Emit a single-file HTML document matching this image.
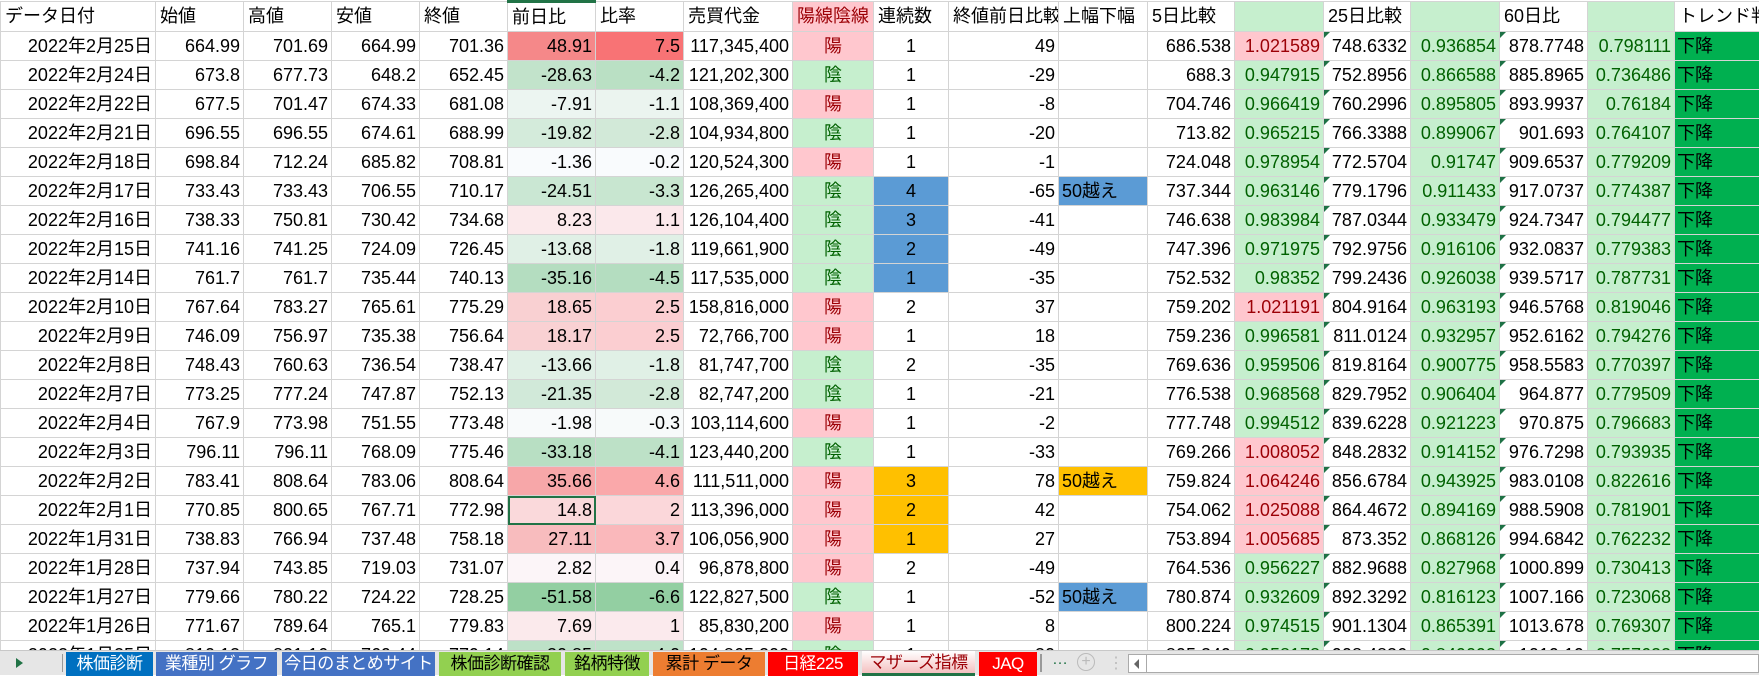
<!DOCTYPE html>
<html><head><meta charset="utf-8"><style>
*{margin:0;padding:0;box-sizing:border-box}
body{width:1759px;height:675px;overflow:hidden;background:#fff;font-family:"Liberation Sans","Noto Sans CJK JP",sans-serif;font-size:18px;color:#000;position:relative}
table{position:absolute;left:0;top:0;border-collapse:collapse;table-layout:fixed;width:1759px}
td{border:1px solid #d4d4d4;height:29px;padding:0 3px;text-align:right;white-space:nowrap;overflow:hidden;line-height:27px;position:relative}
tr.h td{height:30px;text-align:left;padding-left:4px}
td.c{text-align:center}
td.l{text-align:left}
.yo{background:#ffc7ce;color:#9c0006;text-align:center}
.in{background:#c6efce;color:#006100;text-align:center}
.g{background:#c6efce;color:#006100}
.p{background:#ffc7ce;color:#9c0006}
.s{background:#00b050;text-align:left;padding-left:2px}
.b{background:#5b9bd5}
.o{background:#ffc000}
.t::before{content:"";position:absolute;left:0;top:0;border-top:6px solid #1e7145;border-right:6px solid transparent}
.sel{outline:2px solid #217346;outline-offset:-2px}
#bar{position:absolute;left:0;top:650px;width:1759px;height:25px;background:#e6e6e6;border-top:1px solid #c8c8c8}
.tab{position:absolute;top:1px;height:24px;line-height:23px;text-align:center;font-size:17px;color:#fff;white-space:nowrap;overflow:hidden;letter-spacing:-0.5px}
</style></head><body>
<table>
<colgroup><col style="width:155px"><col style="width:88px"><col style="width:88px"><col style="width:88px"><col style="width:88px"><col style="width:88px"><col style="width:88px"><col style="width:109px"><col style="width:81px"><col style="width:75px"><col style="width:110px"><col style="width:89px"><col style="width:87px"><col style="width:89px"><col style="width:87px"><col style="width:89px"><col style="width:88px"><col style="width:87px"><col style="width:85px"></colgroup>
<tr class="h"><td>データ日付</td><td>始値</td><td>高値</td><td>安値</td><td>終値</td><td style="border-top:3px solid #217346">前日比</td><td>比率</td><td>売買代金</td><td style="background:#ffc7ce;color:#9c0006">陽線陰線</td><td>連続数</td><td>終値前日比較</td><td>上幅下幅</td><td>5日比較</td><td class="g"></td><td>25日比較</td><td class="g"></td><td>60日比</td><td class="g"></td><td>トレンド判</td></tr>
<tr><td>2022年2月25日</td><td>664.99</td><td>701.69</td><td>664.99</td><td>701.36</td><td style="background:#f58889">48.91</td><td style="background:#f87375">7.5</td><td>117,345,400</td><td class="yo">陽</td><td class="c">1</td><td>49</td><td></td><td>686.538</td><td class="p">1.021589</td><td class="t">748.6332</td><td class="g">0.936854</td><td class="t">878.7748</td><td class="g">0.798111</td><td class="s">下降</td></tr>
<tr><td>2022年2月24日</td><td>673.8</td><td>677.73</td><td>648.2</td><td>652.45</td><td style="background:#c2e3cb">-28.63</td><td style="background:#bae0c4">-4.2</td><td>121,202,300</td><td class="in">陰</td><td class="c">1</td><td>-29</td><td></td><td>688.3</td><td class="g">0.947915</td><td class="t">752.8956</td><td class="g">0.866588</td><td class="t">885.8965</td><td class="g">0.736486</td><td class="s">下降</td></tr>
<tr><td>2022年2月22日</td><td>677.5</td><td>701.47</td><td>674.33</td><td>681.08</td><td style="background:#ecf5f1">-7.91</td><td style="background:#ebf4ef">-1.1</td><td>108,369,400</td><td class="yo">陽</td><td class="c">1</td><td>-8</td><td></td><td>704.746</td><td class="g">0.966419</td><td class="t">760.2996</td><td class="g">0.895805</td><td class="t">893.9937</td><td class="g">0.76184</td><td class="s">下降</td></tr>
<tr><td>2022年2月21日</td><td>696.55</td><td>696.55</td><td>674.61</td><td>688.99</td><td style="background:#d4ebdb">-19.82</td><td style="background:#d2e9d8">-2.8</td><td>104,934,800</td><td class="in">陰</td><td class="c">1</td><td>-20</td><td></td><td>713.82</td><td class="g">0.965215</td><td class="t">766.3388</td><td class="g">0.899067</td><td class="t">901.693</td><td class="g">0.764107</td><td class="s">下降</td></tr>
<tr><td>2022年2月18日</td><td>698.84</td><td>712.24</td><td>685.82</td><td>708.81</td><td style="background:#f9fbfd">-1.36</td><td style="background:#f9fbfd">-0.2</td><td>120,524,300</td><td class="yo">陽</td><td class="c">1</td><td>-1</td><td></td><td>724.048</td><td class="g">0.978954</td><td class="t">772.5704</td><td class="g">0.91747</td><td class="t">909.6537</td><td class="g">0.779209</td><td class="s">下降</td></tr>
<tr><td>2022年2月17日</td><td>733.43</td><td>733.43</td><td>706.55</td><td>710.17</td><td style="background:#cae7d3">-24.51</td><td style="background:#c8e6d0">-3.3</td><td>126,265,400</td><td class="in">陰</td><td class="c b">4</td><td>-65</td><td class="l b">50越え</td><td>737.344</td><td class="g">0.963146</td><td class="t">779.1796</td><td class="g">0.911433</td><td class="t">917.0737</td><td class="g">0.774387</td><td class="s">下降</td></tr>
<tr><td>2022年2月16日</td><td>738.33</td><td>750.81</td><td>730.42</td><td>734.68</td><td style="background:#fbe9eb">8.23</td><td style="background:#fbe8eb">1.1</td><td>126,104,400</td><td class="in">陰</td><td class="c b">3</td><td>-41</td><td></td><td>746.638</td><td class="g">0.983984</td><td class="t">787.0344</td><td class="g">0.933479</td><td class="t">924.7347</td><td class="g">0.794477</td><td class="s">下降</td></tr>
<tr><td>2022年2月15日</td><td>741.16</td><td>741.25</td><td>724.09</td><td>726.45</td><td style="background:#e0f0e6">-13.68</td><td style="background:#e0f0e6">-1.8</td><td>119,661,900</td><td class="in">陰</td><td class="c b">2</td><td>-49</td><td></td><td>747.396</td><td class="g">0.971975</td><td class="t">792.9756</td><td class="g">0.916106</td><td class="t">932.0837</td><td class="g">0.779383</td><td class="s">下降</td></tr>
<tr><td>2022年2月14日</td><td>761.7</td><td>761.7</td><td>735.44</td><td>740.13</td><td style="background:#b4ddc0">-35.16</td><td style="background:#b4ddc0">-4.5</td><td>117,535,000</td><td class="in">陰</td><td class="c b">1</td><td>-35</td><td></td><td>752.532</td><td class="g">0.98352</td><td class="t">799.2436</td><td class="g">0.926038</td><td class="t">939.5717</td><td class="g">0.787731</td><td class="s">下降</td></tr>
<tr><td>2022年2月10日</td><td>767.64</td><td>783.27</td><td>765.61</td><td>775.29</td><td style="background:#f9d0d2">18.65</td><td style="background:#fbced1">2.5</td><td>158,816,000</td><td class="yo">陽</td><td class="c">2</td><td>37</td><td></td><td>759.202</td><td class="p">1.021191</td><td class="t">804.9164</td><td class="g">0.963193</td><td class="t">946.5768</td><td class="g">0.819046</td><td class="s">下降</td></tr>
<tr><td>2022年2月9日</td><td>746.09</td><td>756.97</td><td>735.38</td><td>756.64</td><td style="background:#f9d1d3">18.17</td><td style="background:#fbced1">2.5</td><td>72,766,700</td><td class="yo">陽</td><td class="c">1</td><td>18</td><td></td><td>759.236</td><td class="g">0.996581</td><td class="t">811.0124</td><td class="g">0.932957</td><td class="t">952.6162</td><td class="g">0.794276</td><td class="s">下降</td></tr>
<tr><td>2022年2月8日</td><td>748.43</td><td>760.63</td><td>736.54</td><td>738.47</td><td style="background:#e0f0e6">-13.66</td><td style="background:#e0f0e6">-1.8</td><td>81,747,700</td><td class="in">陰</td><td class="c">2</td><td>-35</td><td></td><td>769.636</td><td class="g">0.959506</td><td class="t">819.8164</td><td class="g">0.900775</td><td class="t">958.5583</td><td class="g">0.770397</td><td class="s">下降</td></tr>
<tr><td>2022年2月7日</td><td>773.25</td><td>777.24</td><td>747.87</td><td>752.13</td><td style="background:#d1e9d9">-21.35</td><td style="background:#d2e9d8">-2.8</td><td>82,747,200</td><td class="in">陰</td><td class="c">1</td><td>-21</td><td></td><td>776.538</td><td class="g">0.968568</td><td class="t">829.7952</td><td class="g">0.906404</td><td class="t">964.877</td><td class="g">0.779509</td><td class="s">下降</td></tr>
<tr><td>2022年2月4日</td><td>767.9</td><td>773.98</td><td>751.55</td><td>773.48</td><td style="background:#f8fafb">-1.98</td><td style="background:#f7fafa">-0.3</td><td>103,114,600</td><td class="yo">陽</td><td class="c">1</td><td>-2</td><td></td><td>777.748</td><td class="g">0.994512</td><td class="t">839.6228</td><td class="g">0.921223</td><td class="t">970.875</td><td class="g">0.796683</td><td class="s">下降</td></tr>
<tr><td>2022年2月3日</td><td>796.11</td><td>796.11</td><td>768.09</td><td>775.46</td><td style="background:#b8dfc3">-33.18</td><td style="background:#bde1c7">-4.1</td><td>123,440,200</td><td class="in">陰</td><td class="c">1</td><td>-33</td><td></td><td>769.266</td><td class="p">1.008052</td><td class="t">848.2832</td><td class="g">0.914152</td><td class="t">976.7298</td><td class="g">0.793935</td><td class="s">下降</td></tr>
<tr><td>2022年2月2日</td><td>783.41</td><td>808.64</td><td>783.06</td><td>808.64</td><td style="background:#f7a7a9">35.66</td><td style="background:#faa8aa">4.6</td><td>111,511,000</td><td class="yo">陽</td><td class="c o">3</td><td>78</td><td class="l o">50越え</td><td>759.824</td><td class="p">1.064246</td><td class="t">856.6784</td><td class="g">0.943925</td><td class="t">983.0108</td><td class="g">0.822616</td><td class="s">下降</td></tr>
<tr><td>2022年2月1日</td><td>770.85</td><td>800.65</td><td>767.71</td><td>772.98</td><td class="sel" style="background:#fad9db">14.8</td><td style="background:#fbd7da">2</td><td>113,396,000</td><td class="yo">陽</td><td class="c o">2</td><td>42</td><td></td><td>754.062</td><td class="p">1.025088</td><td class="t">864.4672</td><td class="g">0.894169</td><td class="t">988.5908</td><td class="g">0.781901</td><td class="s">下降</td></tr>
<tr><td>2022年1月31日</td><td>738.83</td><td>766.94</td><td>737.48</td><td>758.18</td><td style="background:#f8bcbe">27.11</td><td style="background:#fab8bb">3.7</td><td>106,056,900</td><td class="yo">陽</td><td class="c o">1</td><td>27</td><td></td><td>753.894</td><td class="p">1.005685</td><td class="t">873.352</td><td class="g">0.868126</td><td class="t">994.6842</td><td class="g">0.762232</td><td class="s">下降</td></tr>
<tr><td>2022年1月28日</td><td>737.94</td><td>743.85</td><td>719.03</td><td>731.07</td><td style="background:#fcf5f8">2.82</td><td style="background:#fcf5f8">0.4</td><td>96,878,800</td><td class="yo">陽</td><td class="c">2</td><td>-49</td><td></td><td>764.536</td><td class="g">0.956227</td><td class="t">882.9688</td><td class="g">0.827968</td><td class="t">1000.899</td><td class="g">0.730413</td><td class="s">下降</td></tr>
<tr><td>2022年1月27日</td><td>779.66</td><td>780.22</td><td>724.22</td><td>728.25</td><td style="background:#93cfa2">-51.58</td><td style="background:#93cfa2">-6.6</td><td>122,827,500</td><td class="in">陰</td><td class="c">1</td><td>-52</td><td class="l b">50越え</td><td>780.874</td><td class="g">0.932609</td><td class="t">892.3292</td><td class="g">0.816123</td><td class="t">1007.166</td><td class="g">0.723068</td><td class="s">下降</td></tr>
<tr><td>2022年1月26日</td><td>771.67</td><td>789.64</td><td>765.1</td><td>779.83</td><td style="background:#fbeaec">7.69</td><td style="background:#fbeaed">1</td><td>85,830,200</td><td class="yo">陽</td><td class="c">1</td><td>8</td><td></td><td>800.224</td><td class="g">0.974515</td><td class="t">901.1304</td><td class="g">0.865391</td><td class="t">1013.678</td><td class="g">0.769307</td><td class="s">下降</td></tr>
<tr><td>2022年1月25日</td><td>810.13</td><td>821.16</td><td>769.44</td><td>779.14</td><td style="background:#bde1c7">-30.85</td><td style="background:#bee2c8">-4.0</td><td>104,865,200</td><td class="in">陰</td><td class="c">1</td><td>-30</td><td></td><td>805.349</td><td class="g">0.958178</td><td class="t">908.4836</td><td class="g">0.849093</td><td class="t">1019.19</td><td class="g">0.757622</td><td class="s">下降</td></tr>
</table>
<div id="bar">
<div style="position:absolute;left:16px;top:7px;border-left:7px solid #217346;border-top:5px solid transparent;border-bottom:5px solid transparent"></div>
<div style="position:absolute;left:62px;top:3px;width:1px;height:18px;background:#999"></div>
<div class="tab" style="left:66px;width:87px;background:#0070c0">株価診断</div>
<div class="tab" style="left:156px;width:121px;background:#4472c4">業種別 グラフ</div>
<div class="tab" style="left:282px;width:153px;background:#4472c4">今日のまとめサイト</div>
<div class="tab" style="left:439px;width:122px;background:#92d050;color:#000">株価診断確認</div>
<div class="tab" style="left:565px;width:84px;background:#92d050;color:#000">銘柄特徴</div>
<div class="tab" style="left:653px;width:112px;background:#ed7d31;color:#000">累計 データ</div>
<div class="tab" style="left:768px;width:90px;background:#ff0000">日経225</div>
<div class="tab" style="left:862px;width:113px;background:linear-gradient(#fff,#f4c0c0);color:#9c0006;border-bottom:3px solid #217346;top:0;height:25px">マザーズ指標</div>
<div class="tab" style="left:979px;width:58px;background:#ff0000">JAQ</div>
<div style="position:absolute;left:1040px;top:3px;width:2px;height:18px;background:#999"></div>
<div style="position:absolute;left:1052px;top:0;color:#217346;font-size:16px">…</div>
<div style="position:absolute;left:1077px;top:2px;width:18px;height:18px;border:1px solid #bbb;border-radius:50%;color:#bbb;font-size:16px;line-height:15px;text-align:center">+</div>
<div style="position:absolute;left:1108px;top:2px;color:#bbb;font-size:16px">⋮</div>
<div style="position:absolute;left:1128px;top:3px;width:631px;height:19px;background:#fff;border:1px solid #aaa"></div>
<div style="position:absolute;left:1128px;top:3px;width:19px;height:19px;border-right:1px solid #aaa"></div>
<div style="position:absolute;left:1134px;top:8px;border-right:5px solid #666;border-top:5px solid transparent;border-bottom:5px solid transparent"></div>
</div>
</body></html>
